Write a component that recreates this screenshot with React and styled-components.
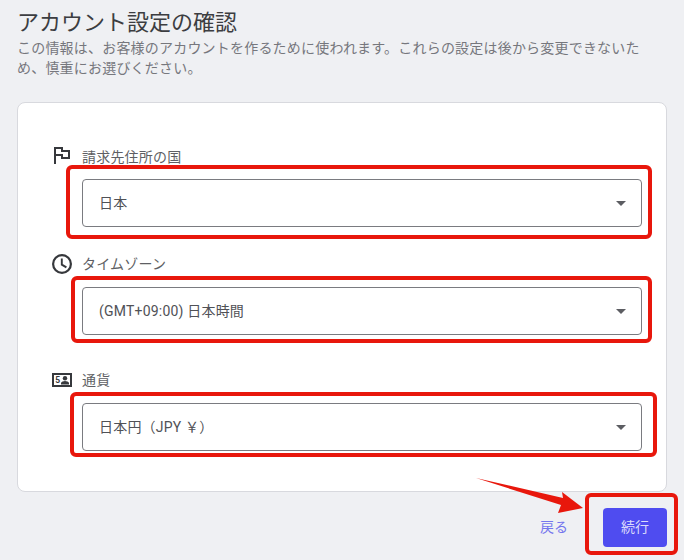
import styled, { createGlobalStyle } from 'styled-components'

const Global = createGlobalStyle`
  html, body{
    margin: 0;
    background: #eff0f3;
  }
  *{
    box-sizing: border-box;
  }
`

const Page = styled.div`
  position: relative;
  width: 684px;
  height: 560px;
  overflow: hidden;
  padding: 9px 17px 0 17px;
  background: #eff0f3;
  font-family: Roboto, "Noto Sans CJK JP", sans-serif;
`

const Title = styled.h1`
  margin: 0 0 1px;
  font-size: 22px;
  font-weight: 400;
  line-height: 28px;
  color: #3c3d41;
`

const Lead = styled.p`
  margin: 0;
  width: 630px;
  font-size: 14px;
  line-height: 20px;
  letter-spacing: 0.2px;
  color: #76777d;
`

const Card = styled.section`
  margin-top: 24px;
  height: 390px;
  padding: 44px 24px 0 34px;
  background: #fff;
  border: 1px solid #d8d9de;
  border-radius: 8px;
`

const Field = styled.div`
  display: grid;
  grid-template-columns: 30px 1fr;
  margin-top: ${p => p.$top}px;
`

const IconCell = styled.div`
  display: flex;
  align-items: center;
  height: 20px;
  padding-left: ${p => p.$x || 0}px;
  color: #36383c;
  svg{
    display: block;
    transform: translateY(${p => p.$shift}px);
  }
`

const Label = styled.label`
  font-size: 14px;
  line-height: 20px;
  letter-spacing: 0.2px;
  color: #5e5f64;
`

const SelectBox = styled.div`
  position: relative;
  grid-column: 2;
  display: flex;
  align-items: center;
  justify-content: space-between;
  height: 48px;
  margin-top: ${p => p.$gap}px;
  padding: 0 15px 0 16px;
  border: 1px solid #7a7b80;
  border-radius: 4px;
  font-size: 14px;
  letter-spacing: 0.2px;
  color: #505156;
`

const Value = styled.span`
  margin-bottom: 3px;
`

const Caret = styled.span`
  width: 0;
  height: 0;
  border-left: 5px solid transparent;
  border-right: 5px solid transparent;
  border-top: 5px solid #5c5d62;
`

const Highlight = styled.span`
  position: absolute;
  top: ${p => p.$t}px;
  right: ${p => p.$r}px;
  bottom: ${p => p.$b}px;
  left: ${p => p.$l}px;
  border: 4px solid #e8170c;
  border-radius: 6px;
  pointer-events: none;
`

const Footer = styled.div`
  display: flex;
  justify-content: flex-end;
  align-items: center;
  gap: 35px;
  margin-top: 16px;
`

const BackLink = styled.a`
  padding-bottom: 4px;
  font-size: 14px;
  color: #7476ee;
`

const NextWrap = styled.div`
  position: relative;
`

const NextButton = styled.button`
  display: block;
  width: 64px;
  height: 39px;
  padding: 0 0 3px;
  border: 0;
  border-radius: 4px;
  background: #4f4cf0;
  color: #dcdcfb;
  font: inherit;
  font-size: 14px;
`

const ArrowSvg = styled.svg`
  position: absolute;
  top: 0;
  left: 0;
  pointer-events: none;
`

const FlagIcon = () => (
  <svg width="16" height="17" viewBox="0 0 16 17" fill="currentColor">
    <path d="M0 0h9v3h7v9H7V9H2v8H0zM2 2v5h7v3h5V5H7V2z" />
  </svg>
)

const ClockIcon = () => (
  <svg width="20" height="20" viewBox="0 0 20 20" fill="none" stroke="currentColor">
    <circle cx="10" cy="10" r="8.9" strokeWidth="2.2" />
    <path d="M9.8 4.6v6l4.6 2.8" strokeWidth="1.9" />
  </svg>
)

const MoneyIcon = () => (
  <svg width="20" height="14" viewBox="0 0 20 14">
    <rect x="1" y="1" width="18" height="12" fill="none" stroke="currentColor" strokeWidth="2" />
    <text x="3.2" y="10" fontSize="8.5" fontWeight="700" fontFamily="Roboto, sans-serif" fill="currentColor">5</text>
    <circle cx="13" cy="5.2" r="2.2" fill="currentColor" />
    <path d="M9 11.5v-1.5c0-1.3 2.6-2.1 4-2.1s4 .8 4 2.1v1.5z" fill="currentColor" />
  </svg>
)

export default function App(){
  return(
    <Page>
      <Global />
      <Title>アカウント設定の確認</Title>
      <Lead>この情報は、お客様のアカウントを作るために使われます。これらの設定は後から変更できないため、慎重にお選びください。</Lead>
      <Card>
        <Field $top={0}>
          <IconCell $shift={-2} $x={2}><FlagIcon /></IconCell>
          <Label>請求先住所の国</Label>
          <SelectBox $gap={12}>
            <Value>日本</Value><Caret />
            <Highlight $t={-15} $r={-11} $b={-13} $l={-17} />
          </SelectBox>
        </Field>
        <Field $top={27}>
          <IconCell $shift={0}><ClockIcon /></IconCell>
          <Label>タイムゾーン</Label>
          <SelectBox $gap={13}>
            <Value>(GMT+09:00) 日本時間</Value><Caret />
            <Highlight $t={-12} $r={-11} $b={-9} $l={-12} />
          </SelectBox>
        </Field>
        <Field $top={35}>
          <IconCell $shift={0}><MoneyIcon /></IconCell>
          <Label>通貨</Label>
          <SelectBox $gap={13}>
            <Value>日本円（JPY ￥）</Value><Caret />
            <Highlight $t={-12} $r={-16} $b={-7} $l={-13} />
          </SelectBox>
        </Field>
      </Card>
      <Footer>
        <BackLink>戻る</BackLink>
        <NextWrap>
          <NextButton>続行</NextButton>
          <Highlight $t={-15} $r={-11} $b={-8} $l={-18} />
        </NextWrap>
      </Footer>
      <ArrowSvg width="684" height="560">
        <polygon points="476,478 563,498 562,492 583,508 558,513 561,505" fill="#e8170c" />
      </ArrowSvg>
    </Page>
  )
}
